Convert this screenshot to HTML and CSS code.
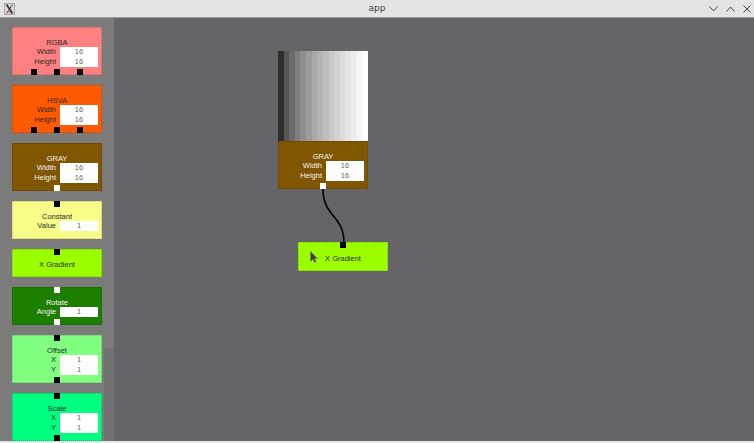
FILE: index.html
```html
<!DOCTYPE html>
<html>
<head>
<meta charset="utf-8">
<link rel="stylesheet" href="styles.css">
</head>
<body>
<div class="window">
  <div class="titlebar">
    <svg class="appicon" width="11" height="12" viewBox="0 0 11 12">
      <rect x="0.5" y="0.5" width="10" height="11" fill="#d8d8d8" stroke="#a8a8a8"/>
      <path d="M2.5 1.5 L8.5 10.5" stroke="#333" stroke-width="1.6"/>
      <path d="M8.5 1.5 L2.5 10.5" stroke="#333" stroke-width="0.9"/>
      <path d="M4 7 L6.8 10.5" stroke="#d04848" stroke-width="1"/>
    </svg>
    <div class="title">app</div>
    <div class="controls">
      <svg width="9" height="6" viewBox="0 0 9 6"><path d="M0.5 0.5 L4.5 5 L8.5 0.5" fill="none" stroke="#444" stroke-width="1"/></svg>
      <svg width="9" height="6" viewBox="0 0 9 6"><path d="M0.5 5.5 L4.5 1 L8.5 5.5" fill="none" stroke="#444" stroke-width="1"/></svg>
      <svg width="8" height="8" viewBox="0 0 8 8"><path d="M0.5 0.5 L7.5 7.5 M7.5 0.5 L0.5 7.5" fill="none" stroke="#444" stroke-width="1"/></svg>
    </div>
  </div>
  <div class="main">
    <div class="sidebar">
      <div class="list">
        <div class="card rgba">
          <div class="name">RGBA</div>
          <div class="fields">
            <div class="labels"><div>Width</div><div>Height</div></div>
            <div class="values"><div>16</div><div>16</div></div>
          </div>
          <div class="ports bottom"><span class="port"></span><span class="port"></span><span class="port"></span></div>
        </div>
        <div class="card hsva">
          <div class="name">HSVA</div>
          <div class="fields">
            <div class="labels"><div>Width</div><div>Height</div></div>
            <div class="values"><div>16</div><div>16</div></div>
          </div>
          <div class="ports bottom"><span class="port"></span><span class="port"></span><span class="port"></span></div>
        </div>
        <div class="card gray light-text">
          <div class="name">GRAY</div>
          <div class="fields">
            <div class="labels"><div>Width</div><div>Height</div></div>
            <div class="values"><div>16</div><div>16</div></div>
          </div>
          <div class="ports bottom"><span class="port white"></span></div>
        </div>
        <div class="card constant">
          <div class="ports top"><span class="port"></span></div>
          <div class="name">Constant</div>
          <div class="fields">
            <div class="labels"><div>Value</div></div>
            <div class="values"><div>1</div></div>
          </div>
        </div>
        <div class="card xgrad">
          <div class="ports top"><span class="port"></span></div>
          <div class="name">X Gradient</div>
        </div>
        <div class="card rotate light-text">
          <div class="ports top"><span class="port white"></span></div>
          <div class="name">Rotate</div>
          <div class="fields">
            <div class="labels"><div>Angle</div></div>
            <div class="values"><div>1</div></div>
          </div>
          <div class="ports bottom"><span class="port white"></span></div>
        </div>
        <div class="card offset">
          <div class="ports top"><span class="port"></span></div>
          <div class="name">Offset</div>
          <div class="fields">
            <div class="labels"><div>X</div><div>Y</div></div>
            <div class="values"><div>1</div><div>1</div></div>
          </div>
          <div class="ports bottom"><span class="port"></span></div>
        </div>
        <div class="card scale">
          <div class="ports top"><span class="port"></span></div>
          <div class="name">Scale</div>
          <div class="fields">
            <div class="labels"><div>X</div><div>Y</div></div>
            <div class="values"><div>1</div><div>1</div></div>
          </div>
          <div class="ports bottom"><span class="port"></span></div>
        </div>
      </div>
      <div class="scrollbar"><div class="thumb"></div></div>
    </div>
    <div class="canvas">
      <svg class="wires" width="640" height="423" viewBox="0 0 640 423">
        <path d="M209 171 C209 199, 230 197, 230 225" fill="none" stroke="#000" stroke-width="1.6"/>
      </svg>
      <div class="node node-gray">
        <div class="preview"></div>
        <div class="card gray light-text">
          <div class="name">GRAY</div>
          <div class="fields">
            <div class="labels"><div>Width</div><div>Height</div></div>
            <div class="values"><div>16</div><div>16</div></div>
          </div>
          <div class="ports bottom"><span class="port white"></span></div>
        </div>
      </div>
      <div class="node node-xgrad">
        <div class="card xgrad">
          <div class="ports top"><span class="port"></span></div>
          <div class="name">X Gradient</div>
        </div>
      </div>
      <svg class="cursor" width="8" height="12" viewBox="0 0 8 12">
        <path d="M0.5 0.5 L0.5 10.5 L3 8.2 L4.6 11.5 L6 10.8 L4.5 7.6 L7.5 7.6 Z" fill="#3a3a3a" stroke="#777" stroke-width="0.6"/>
      </svg>
    </div>
  </div>
</div>
</body>
</html>
```

FILE: styles.css
```css
html, body {
  margin: 0;
  padding: 0;
  width: 754px;
  height: 443px;
  overflow: hidden;
  font-family: "Liberation Sans", Arial, sans-serif;
}

.window {
  width: 754px;
  height: 443px;
  display: flex;
  flex-direction: column;
  box-sizing: border-box;
  border-bottom: 2px solid #e6e6e6;
  background: #656468;
}

.titlebar {
  height: 17px;
  flex: none;
  background: #e4e4e4;
  border-top: 1px solid #b8b8b8;
  border-bottom: 1px solid #9c9c9c;
  box-sizing: content-box;
  display: flex;
  align-items: center;
  position: relative;
  margin-top: -1px;
}

.appicon {
  margin-left: 4px;
  flex: none;
}

.title {
  position: absolute;
  left: 0;
  right: 0;
  text-align: center;
  font-size: 9px;
  color: #3a3a3a;
  line-height: 17px;
  font-family: "DejaVu Sans", sans-serif;
}

.controls {
  margin-left: auto;
  margin-right: 3px;
  display: flex;
  align-items: center;
  gap: 8px;
}

.main {
  flex: 1;
  display: flex;
  min-height: 0;
}

.sidebar {
  width: 114px;
  flex: none;
  background: #7b7b7b;
  display: flex;
  overflow: hidden;
}

.list {
  width: 104px;
  padding: 9px 0 0 12px;
  box-sizing: border-box;
  display: flex;
  flex-direction: column;
  gap: 10px;
}

.scrollbar {
  width: 10px;
  background: #727272;
}

.thumb {
  height: 330px;
  background: #7b7b7b;
}

.card {
  position: relative;
  width: 90px;
  flex: none;
  box-sizing: border-box;
  padding: 10px 0 8px;
  outline: 1px dotted rgba(0, 0, 0, 0.22);
  outline-offset: -1px;
  font-size: 7.5px;
  color: #2a2a2a;
}

.card.light-text {
  color: #f4f4f4;
}

.name {
  height: 10px;
  line-height: 11px;
  text-align: center;
}

.fields {
  display: flex;
}

.labels {
  width: 44px;
  padding-right: 4px;
  text-align: right;
  line-height: 10px;
}

.values {
  width: 38px;
  background: #ffffff;
  color: #666;
  text-align: center;
  line-height: 10px;
}

.ports {
  position: absolute;
  left: 0;
  right: 0;
  display: flex;
  justify-content: center;
  gap: 17px;
}

.ports.top { top: 0; }
.ports.bottom { bottom: 0; }

.port {
  width: 6px;
  height: 6px;
  background: #000;
}

.port.white {
  background: #fff;
}

.rgba { background: #ff8080; }
.hsva { background: #ff5a00; }
.gray { background: #805600; }
.constant { background: #f8ff88; }
.xgrad { background: #9cff00; }
.rotate { background: #1d7f00; }
.offset { background: #80ff80; }
.scale { background: #00ff80; }

.canvas {
  flex: 1;
  position: relative;
  background: #656468;
  overflow: hidden;
}

.wires {
  position: absolute;
  left: 0;
  top: 0;
}

.node {
  position: absolute;
  width: 90px;
}

.node-gray {
  left: 164px;
  top: 33px;
}

.node-xgrad {
  left: 184px;
  top: 224px;
}

.node-xgrad .card {
  padding-top: 11px;
}

.preview {
  height: 90px;
  background: linear-gradient(to right,
    #2e2e2e 0 6.25%, #555 6.25% 12.5%, #6c6c6c 12.5% 18.75%, #7e7e7e 18.75% 25%,
    #8e8e8e 25% 31.25%, #9c9c9c 31.25% 37.5%, #a8a8a8 37.5% 43.75%, #b3b3b3 43.75% 50%,
    #bebebe 50% 56.25%, #c8c8c8 56.25% 62.5%, #d2d2d2 62.5% 68.75%, #dbdbdb 68.75% 75%,
    #e4e4e4 75% 81.25%, #ededed 81.25% 87.5%, #f6f6f6 87.5% 93.75%, #ffffff 93.75% 100%);
}

.cursor {
  position: absolute;
  left: 196px;
  top: 233px;
}
```
